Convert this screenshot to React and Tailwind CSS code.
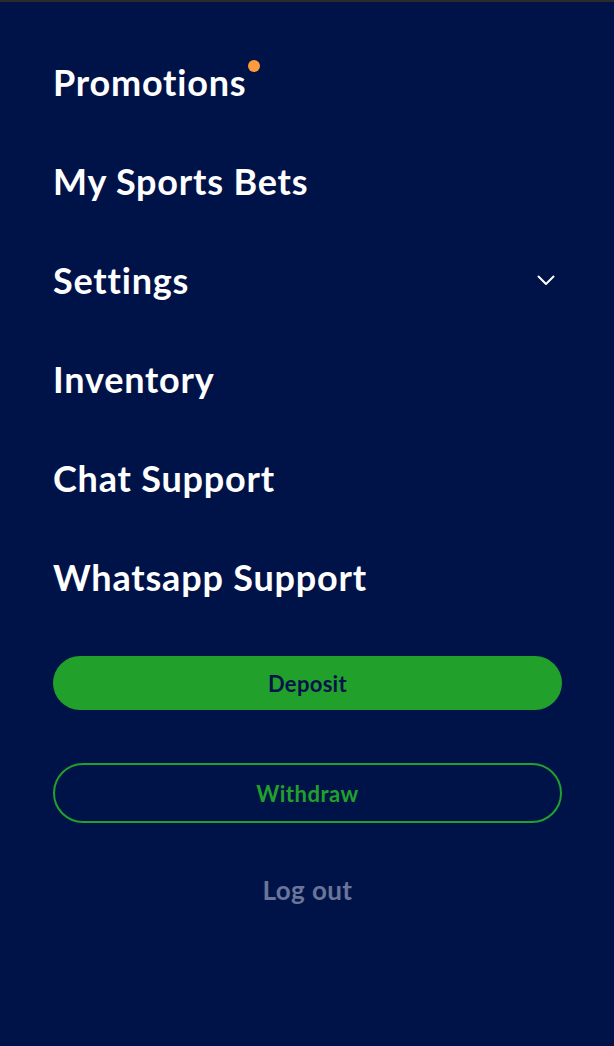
import React from "react";

const items = ["Promotions", "My Sports Bets", "Settings", "Inventory", "Chat Support", "Whatsapp Support"];

export default function App() {
  return (
    <div
      className="w-[614px] h-[1046px] bg-[#001348] flex flex-col"
      style={{ fontFamily: "Lato, 'Open Sans', sans-serif" }}
    >
      <div className="h-[2px] bg-[#2b2b2b] shrink-0" />
      <div className="pl-[53px] pr-[52px] pt-[31px] flex flex-col">
        {items.map((t) => (
          <div key={t} className="h-[99px] flex items-center justify-between">
            <span className="relative text-[36px] leading-[99px] font-bold tracking-[0.8px] text-white">
              {t}
              {t === "Promotions" && (
                <span className="absolute left-[calc(100%+2px)] top-[27px] w-[12px] h-[12px] rounded-full bg-[#ff9a3d]" />
              )}
            </span>
            {t === "Settings" && (
              <svg width="18" height="11" viewBox="0 0 18 11" className="mr-[7px]" fill="none">
                <path d="M1.5 1.5 L9 9 L16.5 1.5" stroke="white" strokeWidth="2" strokeLinecap="round" strokeLinejoin="round" />
              </svg>
            )}
          </div>
        ))}
        <button className="mt-[29px] h-[54px] w-full rounded-full bg-[#21a12c] text-[#001348] text-[22px] tracking-[0.3px] font-bold flex items-center justify-center">
          Deposit
        </button>
        <button className="mt-[53px] h-[60px] w-full rounded-full border-[2.5px] border-[#21a12c] text-[#21a12c] text-[22px] tracking-[0.5px] font-bold flex items-center justify-center">
          Withdraw
        </button>
        <div className="mt-[52px] text-center text-[26px] leading-[31px] tracking-[0.4px] font-bold text-[#6a7599]">Log out</div>
      </div>
    </div>
  );
}
